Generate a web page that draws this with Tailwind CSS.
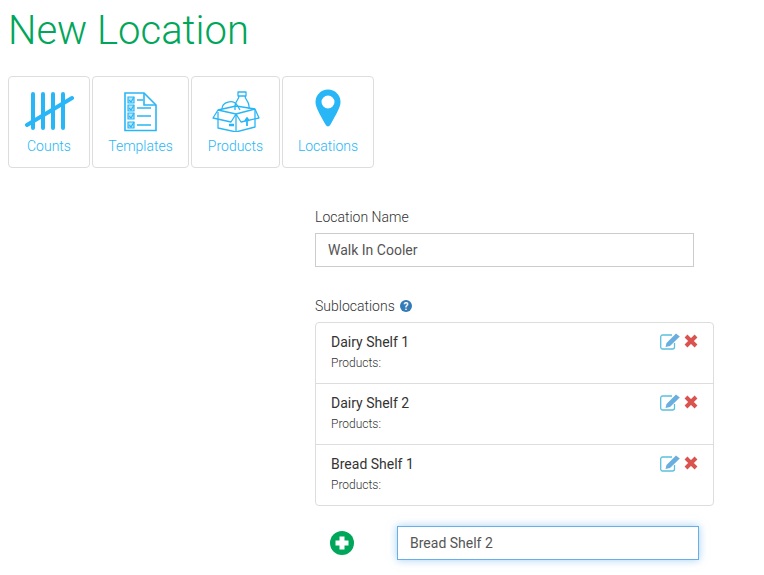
<!DOCTYPE html>
<html><head><meta charset="utf-8">
<script src="https://cdn.jsdelivr.net/npm/@tailwindcss/browser@4"></script>
</head>
<body class="bg-white overflow-hidden font-['Roboto',sans-serif]">
<div class="w-[764px] h-[575px] overflow-hidden pl-2">
  <h1 class="text-[40px] leading-[44px] font-light text-[#00a65a] pt-[9px] h-[76px]">New Location</h1>
  <nav class="flex gap-0.5 h-[92px]">
    <a class="w-[82px] rounded border border-[#ddd] flex flex-col items-center text-[14px] font-light text-[#29b6f6]">
      <svg class="mt-[14px]" width="50" height="40" viewBox="0 0 50 40" fill="none" stroke="#29b6f6" stroke-linecap="round"><path stroke-width="4" d="M9 3V37M19 3V37M29 3V37M39 3V37"/><path stroke-width="4" d="M3 34L48 7"/></svg>
      <span class="mt-[5px] leading-5">Counts</span>
    </a>
    <a class="w-[97px] rounded border border-[#ddd] flex flex-col items-center text-[14px] font-light text-[#29b6f6]">
      <svg class="mt-[15px]" width="33" height="40" viewBox="0 0 33 40" fill="none" stroke="#29b6f6"><path stroke-width="1.600" d="M1 1H20L32 13V38.500H1Z"/><path stroke-width="1.600" d="M20 1V13H32"/><path stroke-width="1.500" d="M13 8H19M13 16H27M13 24H27M13 33H27"/><path fill="#b3e5fc" stroke-width="1.200" d="M4 5H10V11H4ZM4 13H10V19H4ZM4 21H10V27H4ZM4 30H10V36H4Z"/><path stroke-width="1.200" d="M5 8L7 10L10 5M5 16L7 18L10 13M5 24L7 26L10 21M5 33L7 35L10 30"/></svg>
      <span class="mt-1 leading-5">Templates</span>
    </a>
    <a class="w-[89px] rounded border border-[#ddd] flex flex-col items-center text-[14px] font-light text-[#29b6f6]">
      <svg class="mt-[14px]" width="48" height="41" viewBox="0 0 48 41" fill="none" stroke="#29b6f6" stroke-width="1.300" stroke-linejoin="round"><path d="M26 1H34V5H26ZM27 5C27 9 23 10 23 15V19M33 5C33 9 37 10 37 15V18"/><path d="M10 18C10 11 21 8 25 14L28 19"/><path d="M6 21V37L24 41L43 36V19"/><path d="M24 23V41"/><path d="M24 23L6 19L1 27L19 31ZM24 23L43 18L47 27L29 31Z"/><path d="M6 19L24 15L43 18"/><path stroke-width="2.500" d="M17 34H22"/><path stroke-width="1.800" d="M35 35V28M33 30L35 27L37 30"/></svg>
      <span class="mt-1 leading-5">Products</span>
    </a>
    <a class="w-[92px] rounded border border-[#ddd] flex flex-col items-center text-[14px] font-light text-[#29b6f6]">
      <svg class="mt-[12px]" width="26" height="38" viewBox="0 0 26 38"><path fill="#29b6f6" fill-rule="evenodd" d="M13 0.500C6 0.500 0.500 6 0.500 13C0.500 18 4 24 10.500 35.500C12 38 14 38 15.500 35.500C22 24 25.500 18 25.500 13C25.500 6 20 0.500 13 0.500ZM13 6.500A6.500 6.500 0 1 1 13 19.500A6.500 6.500 0 1 1 13 6.500Z"/></svg>
      <span class="mt-[9px] leading-5">Locations</span>
    </a>
  </nav>

  <main class="ml-[307px] pt-[39px]">
    <label class="block text-[14px] font-light text-[#333] leading-5">Location Name</label>
    <div class="mt-[6px] w-[379px] h-[34px] border border-[#ccc] text-[14px] text-[#555] pl-3 flex items-center">Walk In Cooler</div>

    <div class="mt-[29px] flex items-center gap-[5px] h-5">
      <span class="text-[14px] font-light text-[#333]">Sublocations</span>
      <svg width="12" height="12" viewBox="0 0 12 12"><circle cx="6" cy="6" r="6" fill="#337ab7"/><text x="6" y="9.500" text-anchor="middle" font-size="10" font-weight="700" fill="#fff" font-family="Roboto">?</text></svg>
    </div>

    <ul class="mt-[6px] w-[399px] h-[184px] border border-[#ddd] rounded flex flex-col">
      <li class="h-[61px] border-b border-[#ddd] px-[15px] pt-[9px] flex justify-between">
        <div><p class="text-[14px] text-[#333] leading-5">Dairy Shelf 1</p><p class="text-[12px] font-light text-[#333] leading-4 mt-[3px]">Products:</p></div>
        <div class="flex gap-[4px] items-start mt-px">
          <svg width="20" height="17" viewBox="0 0 20 17" fill="none"><path stroke="#5bc0de" stroke-width="1.300" d="M14.500 10V14C14.500 15 13.500 16 12.500 16H2.500C1.500 16 0.700 15 0.700 14V4C0.700 3 1.500 2 2.500 2H12"/><path fill="#6aaee0" d="M16 0.500L19.800 3.500L10 13L5.500 14L6.500 10Z"/></svg>
          <svg class="mt-px" width="14" height="14" viewBox="0 0 14 14"><path stroke="#d9534f" stroke-width="4" d="M2 2L12 12M12 2L2 12"/></svg>
        </div>
      </li>
      <li class="h-[61px] border-b border-[#ddd] px-[15px] pt-[9px] flex justify-between">
        <div><p class="text-[14px] text-[#333] leading-5">Dairy Shelf 2</p><p class="text-[12px] font-light text-[#333] leading-4 mt-[3px]">Products:</p></div>
        <div class="flex gap-[4px] items-start mt-px">
          <svg width="20" height="17" viewBox="0 0 20 17" fill="none"><path stroke="#5bc0de" stroke-width="1.300" d="M14.500 10V14C14.500 15 13.500 16 12.500 16H2.500C1.500 16 0.700 15 0.700 14V4C0.700 3 1.500 2 2.500 2H12"/><path fill="#6aaee0" d="M16 0.500L19.800 3.500L10 13L5.500 14L6.500 10Z"/></svg>
          <svg class="mt-px" width="14" height="14" viewBox="0 0 14 14"><path stroke="#d9534f" stroke-width="4" d="M2 2L12 12M12 2L2 12"/></svg>
        </div>
      </li>
      <li class="h-[60px] px-[15px] pt-[9px] flex justify-between">
        <div><p class="text-[14px] text-[#333] leading-5">Bread Shelf 1</p><p class="text-[12px] font-light text-[#333] leading-4 mt-[3px]">Products:</p></div>
        <div class="flex gap-[4px] items-start mt-px">
          <svg width="20" height="17" viewBox="0 0 20 17" fill="none"><path stroke="#5bc0de" stroke-width="1.300" d="M14.500 10V14C14.500 15 13.500 16 12.500 16H2.500C1.500 16 0.700 15 0.700 14V4C0.700 3 1.500 2 2.500 2H12"/><path fill="#6aaee0" d="M16 0.500L19.800 3.500L10 13L5.500 14L6.500 10Z"/></svg>
          <svg class="mt-px" width="14" height="14" viewBox="0 0 14 14"><path stroke="#d9534f" stroke-width="4" d="M2 2L12 12M12 2L2 12"/></svg>
        </div>
      </li>
    </ul>

    <div class="mt-5 flex items-center pl-[15px]">
      <svg width="24" height="24" viewBox="0 0 24 24"><circle cx="12" cy="12" r="12" fill="#00a65a"/><path stroke="#fff" stroke-width="5" d="M12 5.500V18.500M5.500 12H18.500"/></svg>
      <div class="ml-[43px] w-[302px] h-[34px] border border-[#66afe9] shadow-[0_0_8px_rgba(102,175,233,0.6)] text-[14px] text-[#555] pl-3 flex items-center">Bread Shelf 2</div>
    </div>
  </main>
</div>
</body></html>
